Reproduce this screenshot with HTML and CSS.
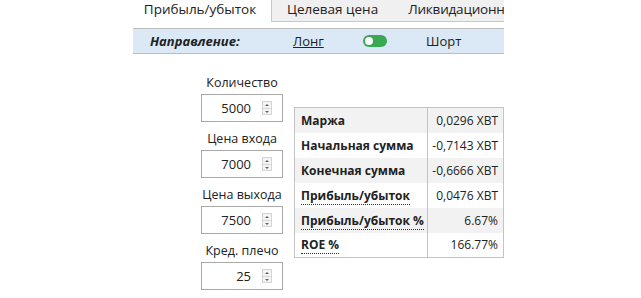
FILE: index.html
```html
<!DOCTYPE html>
<html lang="ru">
<head>
<meta charset="utf-8">
<link rel="stylesheet" href="styles.css">
</head>
<body>
<div class="panel">
  <div class="tabs">
    <div class="tab active">Прибыль/убыток</div>
    <div class="tab-rest">
      <div class="tab">Целевая цена</div>
      <div class="tab tight">Ликвидационн</div>
    </div>
  </div>
  <div class="direction">
    <span class="dir-label">Направление:</span>
    <span class="dir-long">Лонг</span>
    <span class="switch"><span class="knob"></span></span>
    <span class="dir-short">Шорт</span>
  </div>
  <div class="main">
    <div class="inputs">
      <div class="field">
        <div class="field-label">Количество</div>
        <div class="box"><span class="val">5000</span><span class="spin"><span class="up"></span><span class="down"></span></span></div>
      </div>
      <div class="field">
        <div class="field-label">Цена входа</div>
        <div class="box"><span class="val">7000</span><span class="spin"><span class="up"></span><span class="down"></span></span></div>
      </div>
      <div class="field">
        <div class="field-label">Цена выхода</div>
        <div class="box"><span class="val">7500</span><span class="spin"><span class="up"></span><span class="down"></span></span></div>
      </div>
      <div class="field">
        <div class="field-label">Кред. плечо</div>
        <div class="box"><span class="val">25</span><span class="spin"><span class="up"></span><span class="down"></span></span></div>
      </div>
    </div>
    <table class="results">
      <tr class="shade"><th><span>Маржа</span></th><td>0,0296 XBT</td></tr>
      <tr><th><span>Начальная сумма</span></th><td>-0,7143 XBT</td></tr>
      <tr class="shade"><th><span>Конечная сумма</span></th><td>-0,6666 XBT</td></tr>
      <tr><th><span class="dotted">Прибыль/убыток</span></th><td>0,0476 XBT</td></tr>
      <tr class="shade"><th><span class="dotted">Прибыль/убыток %</span></th><td>6.67%</td></tr>
      <tr><th><span class="dotted">ROE %</span></th><td>166.77%</td></tr>
    </table>
  </div>
</div>
</body>
</html>
```
FILE: styles.css
```css
html, body {
  margin: 0;
  padding: 0;
  background: #fff;
}
body {
  font-family: "Open Sans", "Noto Sans", sans-serif;
  color: #222;
}
.panel {
  margin-left: 133px;
  width: 371px;
}
.tabs {
  display: flex;
  height: 22px;
}
.tab {
  font-size: 13.5px;
  line-height: 18px;
  white-space: nowrap;
}
.tab.tight {
  letter-spacing: -0.2px;
}
.tab.active {
  width: 138px;
  text-align: center;
  padding-right: 4px;
  box-sizing: border-box;
}
.tab-rest {
  flex: 1;
  display: flex;
  gap: 30px;
  overflow: hidden;
  background: #f0f0f0;
  border-left: 1px solid #c8c8c8;
  border-bottom: 1px solid #c8c8c8;
  padding-left: 15px;
}
.direction {
  margin-top: 6px;
  height: 24px;
  background: #dae9f5;
  border-top: 1px solid #bdbdbd;
  border-bottom: 1px solid #bdbdbd;
  display: flex;
  align-items: center;
  font-size: 13px;
}
.dir-label {
  font-weight: bold;
  font-style: italic;
  margin-left: 17px;
  width: 143px;
}
.dir-long {
  text-decoration: underline;
  width: 70px;
}
.switch {
  width: 24px;
  height: 12px;
  border-radius: 6px;
  background: #38a852;
  position: relative;
  margin-right: 39px;
}
.knob {
  position: absolute;
  left: 2px;
  top: 2px;
  width: 8px;
  height: 8px;
  border-radius: 50%;
  background: #fff;
}
.main {
  display: flex;
  align-items: flex-start;
  padding-left: 68px;
  padding-top: 20px;
  gap: 11px;
}
.inputs {
  display: flex;
  flex-direction: column;
  gap: 8px;
  width: 82px;
}
.field-label {
  font-size: 12.5px;
  line-height: 18px;
  text-align: center;
  margin-bottom: 2px;
  white-space: nowrap;
  margin-left: -10px;
  margin-right: -10px;
}
.box {
  height: 26px;
  border: 1px solid #a9a9a9;
  display: flex;
  align-items: center;
  justify-content: flex-end;
  font-size: 13px;
  padding-right: 10px;
}
.val {
  margin-right: 11px;
}
.spin {
  width: 10px;
  height: 14px;
  display: flex;
  flex-direction: column;
  border: 1px solid #d4d4d4;
  box-sizing: border-box;
}
.spin span {
  flex: 1;
  position: relative;
  background: #f4f4f4;
}
.spin .up {
  border-bottom: 1px solid #d4d4d4;
}
.spin .up::after, .spin .down::after {
  content: "";
  position: absolute;
  left: 2px;
  border-left: 2px solid transparent;
  border-right: 2px solid transparent;
}
.spin .up::after {
  top: 2px;
  border-bottom: 2px solid #606060;
}
.spin .down::after {
  top: 2px;
  border-top: 2px solid #606060;
}
.results {
  margin-top: 33px;
  width: 210px;
  border-collapse: collapse;
  border: 1px solid #c4c4c4;
  font-size: 12px;
}
.results tr {
  height: 25px;
}
.results tr.shade {
  background: #f2f2f2;
}
.results th {
  text-align: left;
  font-weight: bold;
  padding: 0 0 0 6px;
  width: 126px;
  border-right: 1px solid #c4c4c4;
  white-space: nowrap;
}
.results td {
  text-align: right;
  padding: 0 5px 0 0;
  white-space: nowrap;
}
.dotted {
  border-bottom: 1px dotted #333;
}
```
